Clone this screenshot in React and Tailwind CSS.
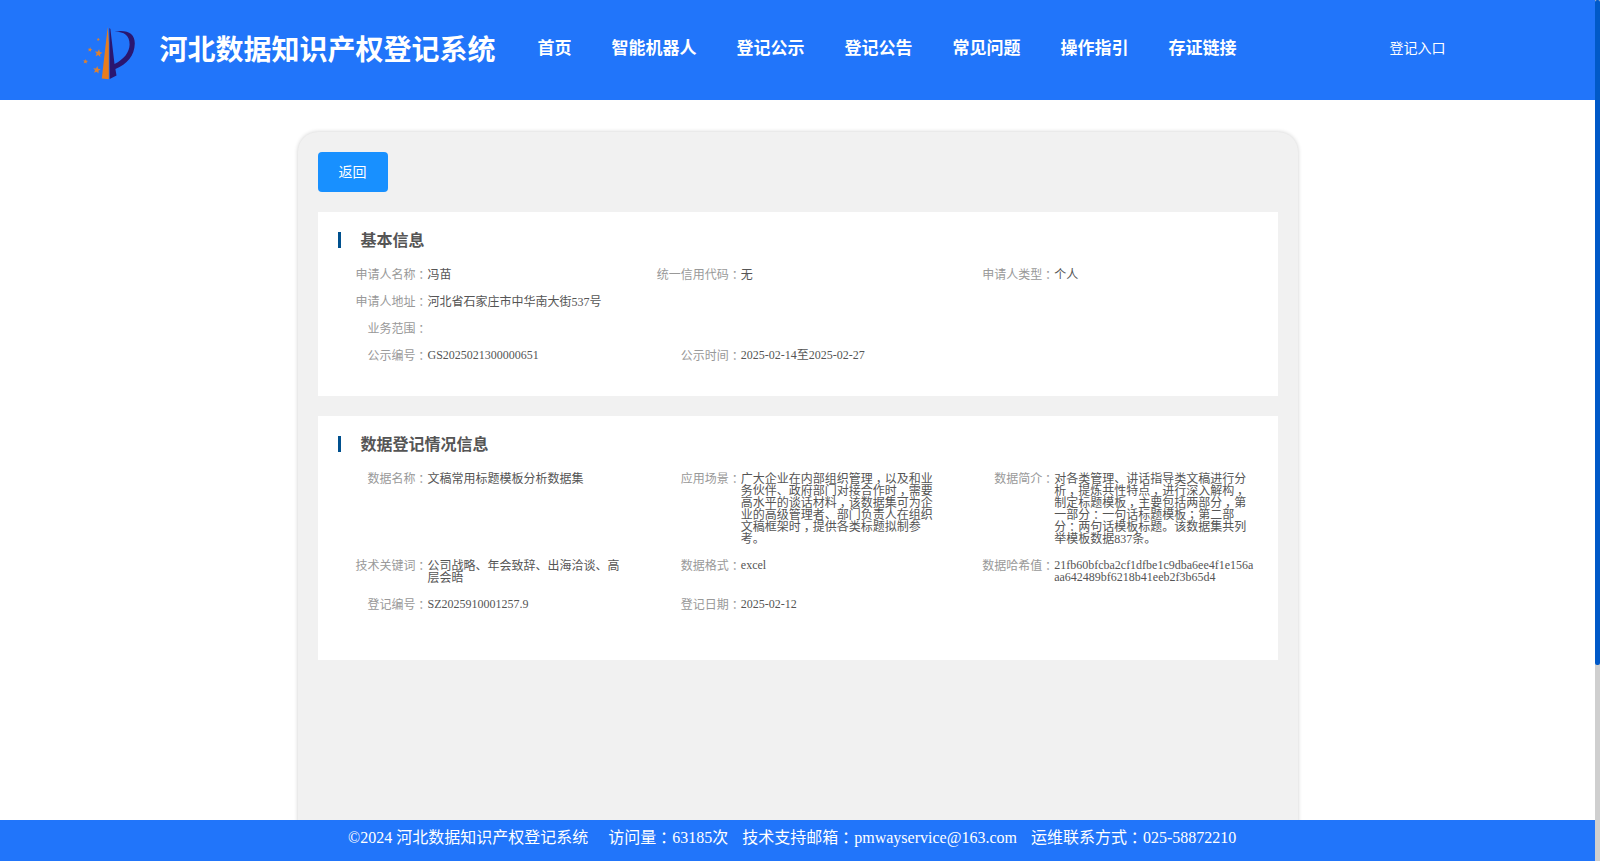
const NAV_ITEMS = ['首页', '智能机器人', '登记公示', '登记公告', '常见问题', '操作指引', '存证链接'];

const BASIC_INFO = [
  { label: '申请人名称', value: '冯苗' },
  { label: '统一信用代码', value: '无' },
  { label: '申请人类型', value: '个人' },
  { label: '申请人地址', value: '河北省石家庄市中华南大街537号', wide: true },
  { label: '业务范围', value: '', wide: true },
  { label: '公示编号', value: 'GS2025021300000651' },
  { label: '公示时间', value: '2025-02-14至2025-02-27' },
];

const DATA_INFO = [
  { label: '数据名称', value: '文稿常用标题模板分析数据集' },
  {
    label: '应用场景',
    value:
      '广大企业在内部组织管理，以及和业务伙伴、政府部门对接合作时，需要高水平的谈话材料，该数据集可为企业的高级管理者、部门负责人在组织文稿框架时，提供各类标题拟制参考。',
  },
  {
    label: '数据简介',
    value:
      '对各类管理、讲话指导类文稿进行分析，提炼共性特点，进行深入解构，制定标题模板，主要包括两部分，第一部分：一句话标题模板；第二部分：两句话模板标题。该数据集共列举模板数据837条。',
  },
  { label: '技术关键词', value: '公司战略、年会致辞、出海洽谈、高层会晤' },
  { label: '数据格式', value: 'excel' },
  { label: '数据哈希值', value: '21fb60bfcba2cf1dfbe1c9dba6ee4f1e156aaa642489bf6218b41eeb2f3b65d4' },
  { label: '登记编号', value: 'SZ2025910001257.9' },
  { label: '登记日期', value: '2025-02-12' },
];

const STARS = [
  { x: 98.3, y: 39.5, r: 1.8 },
  { x: 90, y: 49.7, r: 2.4 },
  { x: 98.5, y: 53.3, r: 4.1 },
  { x: 85.5, y: 61.5, r: 2.6 },
  { x: 96.8, y: 70, r: 4 },
];

function starPoints({ x, y, r }) {
  return Array.from({ length: 10 }, (_, i) => {
    const radius = i % 2 ? r * 0.45 : r;
    const angle = (Math.PI / 5) * i - Math.PI / 2 + 0.15;
    return `${x + radius * Math.cos(angle)},${y + radius * Math.sin(angle)}`;
  }).join(' ');
}

function Logo() {
  return (
    <svg className="mt-[6px] ml-20 h-[60px] w-[60px] shrink-0" viewBox="80 23 60 60">
      {STARS.map((star) => (
        <polygon key={star.x} points={starPoints(star)} fill="#dc8132" />
      ))}
      <path d="M107.7 27 L108.8 43 V79.3 L101.8 78.6 Z" fill="#e87d1e" />
      <path d="M109.4 28 L110.4 29 L114.5 64 C124 59.5 129.5 52 129.6 44.5 C129.6 35.500 124.500 31.800 114.500 31.500 C127 29.400 134.800 33 134.800 43.500 C134.600 55.500 127 64.500 115.400 69 L116.500 75.500 L109.700 79 Z" fill="#2a1670" />
    </svg>
  );
}

// Full-width punctuation sits in the middle of its cell
function CenteredText({ text }) {
  return text.split(/([，：；])/).map((part, i) =>
    i % 2 ? (
      <span key={i} className="relative left-[0.24em]">
        {part}
      </span>
    ) : (
      part
    ),
  );
}

function Field({ label, value, wide }) {
  // Latin values already share the label's baseline
  const isLatin = /^[\x20-\x7e]/.test(value);

  return (
    <div className={`flex text-[12px] leading-[12px] ${wide ? 'col-span-3' : ''}`}>
      <div className="-mb-px w-[90px] shrink-0 pt-px text-right text-[#999]">
        <CenteredText text={`${label}：`} />
      </div>
      <div className={`break-all text-[#555] ${isLatin ? '' : '-mb-px pt-px'} ${wide ? '' : 'w-[200px]'}`}>
        <CenteredText text={value} />
      </div>
    </div>
  );
}

function Panel({ title, fields, className }) {
  return (
    <section className={`mt-5 bg-white pt-5 pl-5 ${className}`}>
      <h2 className="h-4 border-l-3 border-[#00508e] pl-5 text-base leading-[17px] font-bold text-[#555]">{title}</h2>
      <div className="mt-5 grid grid-cols-3 gap-y-[15px]">
        {fields.map((field) => (
          <Field key={field.label} {...field} />
        ))}
      </div>
    </section>
  );
}

export default function App() {
  return (
    <div className="flex h-[861px] overflow-hidden bg-white font-['Liberation_Serif','Noto_Sans_CJK_SC',serif]">
      <div className="flex w-[1595px] flex-col">
        <header className="flex h-[100px] shrink-0 items-center bg-[#2175fa] text-white">
          <Logo />
          <h1 className="mt-[2px] ml-[19.5px] w-[336px] text-[28px] leading-[28px] font-bold whitespace-nowrap">河北数据知识产权登记系统</h1>
          <nav className="mb-1 ml-[42px] flex gap-10 text-[17px] leading-[17px] font-bold whitespace-nowrap">
            {NAV_ITEMS.map((item) => (
              <a key={item}>{item}</a>
            ))}
          </nav>
          <a className="mr-[149.5px] mb-[2px] ml-auto text-sm leading-[14px]">登记入口</a>
        </header>

        <div className="min-h-0 flex-1 overflow-hidden">
          <main className="mx-auto mt-8 h-[900px] w-[1000px] rounded-[20px] bg-[#f1f1f1] p-5 shadow-[0_0_4px_rgba(0,0,0,0.2)]">
            <button className="block h-10 w-[70px] rounded bg-[#1890ff] pt-[2px] text-sm text-white">返回</button>
            <Panel title="基本信息" fields={BASIC_INFO} className="h-[184px]" />
            <Panel title="数据登记情况信息" fields={DATA_INFO} className="h-[244px]" />
          </main>
        </div>

        <footer className="flex h-[41px] shrink-0 bg-[#2175fa] pt-[9px] pl-[348px] text-base leading-[18px] whitespace-nowrap text-white">
          <span>©2024 河北数据知识产权登记系统</span>
          <span className="ml-5">
            <CenteredText text="访问量：63185次" />
          </span>
          <span className="ml-[14px]">
            <CenteredText text="技术支持邮箱：pmwayservice@163.com" />
          </span>
          <span className="ml-[14px]">
            <CenteredText text="运维联系方式：025-58872210" />
          </span>
        </footer>
      </div>

      {/* Scrollbar */}
      <div className="w-[5px] bg-[#cfcfcf]">
        <div className="h-[665px] rounded-[2px] bg-[#0059c8]" />
      </div>
    </div>
  );
}
